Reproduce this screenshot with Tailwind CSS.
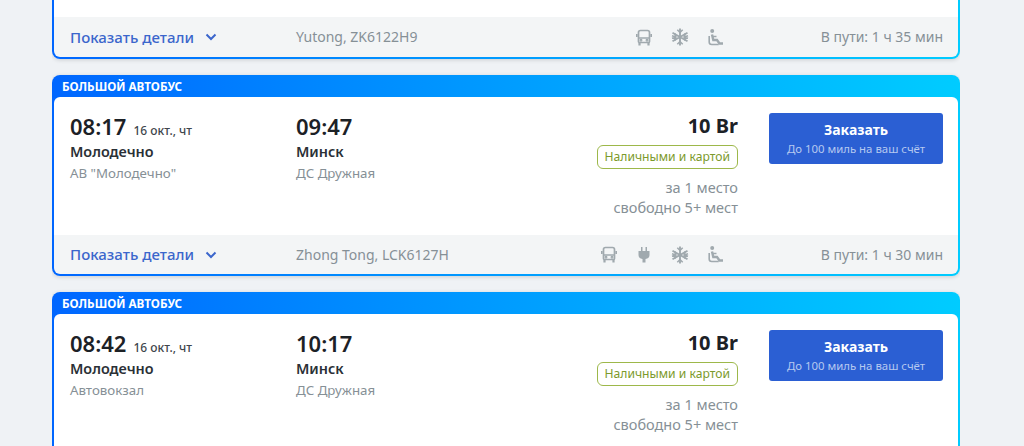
<!DOCTYPE html>
<html lang="ru">
<head>
  <meta charset="UTF-8">
  <meta name="viewport" content="width=device-width, initial-scale=1.0">
  <title>Расписание</title>
  <script src="https://cdn.jsdelivr.net/npm/@tailwindcss/browser@4"></script>
</head>
<body class="bg-[#eff2f5] font-['Noto_Sans',sans-serif] overflow-hidden">
  <div class="h-[446px] overflow-hidden w-[908px] ml-[52px] flex flex-col gap-4">

    <!-- previous card, cut by the top of the window -->
    <div class="shrink-0 rounded-b-lg bg-gradient-to-r from-[#0066ff] to-[#00ccff] px-[2px] pb-[2px] shadow-[0_1px_4px_rgba(0,0,0,0.15)]">
      <div class="h-[17px] bg-white"></div>
      <div class="h-10 bg-[#f3f5f6] rounded-b-md flex items-center pl-4 pr-[15px]">
        <button class="w-[226px] flex items-center text-left text-[15px] tracking-[0.03px] font-medium text-[#3b66cc]">
          Показать детали
          <svg class="ml-[11px] w-3 h-3" viewBox="0 0 12 12" fill="none" stroke="#3b66cc" stroke-width="2"><path d="M1.500 3.500l4.500 4.500 4.500-4.500"/></svg>
        </button>
        <span class="text-sm text-[#869096]">Yutong, ZK6122H9</span>
        <div class="ml-auto flex items-center gap-[19px] text-[#a0a9ae]">
          <svg class="w-4 h-[17px]" viewBox="0 0 16 17" fill="none" stroke="currentColor" stroke-width="1.7"><path d="M2.500 3.500q0-2 2-2h7q2 0 2 2v9q0 1-1 1h-9q-1 0-1-1z"/><path d="M2.500 9h11M.8 5v3M15.200 5v3"/><path d="M3.500 14v2.500M12.500 14v2.500" stroke-width="2.200"/><circle cx="5" cy="11.300" r=".6"/><circle cx="11" cy="11.300" r=".6"/></svg>
          <svg class="w-[18px] h-[18px]" viewBox="0 0 18 18" fill="none" stroke="currentColor" stroke-width="1.900"><path d="M9 .5v17M1.500 4.700l15 8.600M1.500 13.300l15-8.600"/><path d="M6.300 1.800L9 4.500l2.700-2.700M6.300 16.200L9 13.500l2.700 2.700M1 7.800l3.700 1.200-.9-3.800M17 10.200L13.300 9l.9 3.800M1 10.200L4.700 9l-.9 3.800M17 7.800L13.300 9l.9-3.800" stroke-width="1.500"/></svg>
          <svg class="w-4 h-[17px]" viewBox="0 0 16 17" fill="none" stroke="currentColor"><circle cx="4.200" cy="2" r="2" fill="currentColor" stroke="none"/><path d="M4 5.500l1.300 5.500h3.700l2.500 3.500h3.500" stroke-width="2.400"/><path d="M5 7.500h3.500" stroke-width="1.500"/><path d="M1.200 7v6q0 2.500 2.500 2.500h7" stroke-width="1.600"/></svg>
        </div>
        <span class="ml-[97px] text-sm text-[#869096]">В пути: 1 ч 35 мин</span>
      </div>
    </div>

    <!-- card -->
    <div class="shrink-0 rounded-lg bg-gradient-to-r from-[#0066ff] to-[#00ccff] px-[2px] pb-[2px] shadow-[0_1px_4px_rgba(0,0,0,0.15)]">
      <div class="h-[22px] pl-2 pt-[2px] flex items-center text-[11.7px] font-bold text-white">БОЛЬШОЙ АВТОБУС</div>
      <div class="h-[138px] bg-white rounded-t-md flex pl-4 pr-[15px] pt-[13px]">
        <div class="w-[226px]">
          <div class="flex items-baseline gap-[7px] h-[30px] text-[22px] font-semibold text-[#1c2126]">08:17 <span class="text-xs font-medium text-[#3f464c]">16 окт., чт</span></div>
          <div class="mt-[2px] text-[14.4px] leading-5 font-semibold text-[#2a3036]">Молодечно</div>
          <div class="mt-[1px] text-[13.3px] leading-5 text-[#869096]">АВ "Молодечно"</div>
        </div>
        <div>
          <div class="h-[30px] text-[22px] font-semibold text-[#1c2126]">09:47</div>
          <div class="mt-[2px] text-[14.4px] leading-5 font-semibold text-[#2a3036]">Минск</div>
          <div class="mt-[1px] text-[13.3px] leading-5 text-[#869096]">ДС Дружная</div>
        </div>
        <div class="ml-auto flex flex-col items-end pt-[2px]">
          <div class="h-[30px] text-xl leading-[28px] font-bold text-[#1c2126]">10 Br</div>
          <div class="mt-[3px] h-6 px-[7px] flex items-center rounded-md border border-[#9db84a] text-[12.15px] text-[#7c9a2b]">Наличными и картой</div>
          <div class="mt-[8px] text-[14.5px] leading-5 text-[#869096]">за 1 место</div>
          <div class="text-[14.5px] leading-5 text-[#869096]">свободно 5+ мест</div>
        </div>
        <button class="ml-[31px] mt-[3px] w-[174px] h-[51px] rounded-[3px] bg-[#2b5fd3] flex flex-col items-center justify-center">
          <span class="text-sm leading-5 font-bold text-white">Заказать</span>
          <span class="text-[11.4px] leading-4 mt-[1px] text-[#b6c9f0]">До 100 миль на ваш счёт</span>
        </button>
      </div>
      <div class="h-[39px] bg-[#f3f5f6] rounded-b-md flex items-center pl-4 pr-[15px]">
        <button class="w-[226px] flex items-center text-left text-[15px] tracking-[0.03px] font-medium text-[#3b66cc]">
          Показать детали
          <svg class="ml-[11px] w-3 h-3" viewBox="0 0 12 12" fill="none" stroke="#3b66cc" stroke-width="2"><path d="M1.500 3.500l4.500 4.500 4.500-4.500"/></svg>
        </button>
        <span class="text-sm text-[#869096]">Zhong Tong, LCK6127H</span>
        <div class="ml-auto flex items-center gap-[19px] text-[#a0a9ae]">
          <svg class="w-4 h-[17px]" viewBox="0 0 16 17" fill="none" stroke="currentColor" stroke-width="1.7"><path d="M2.500 3.500q0-2 2-2h7q2 0 2 2v9q0 1-1 1h-9q-1 0-1-1z"/><path d="M2.500 9h11M.8 5v3M15.200 5v3"/><path d="M3.500 14v2.500M12.500 14v2.500" stroke-width="2.200"/><circle cx="5" cy="11.300" r=".6"/><circle cx="11" cy="11.300" r=".6"/></svg>
          <svg class="w-4 h-[17px]" viewBox="0 0 16 17" fill="currentColor"><path d="M5 1h1.500v4H5zM9.500 1H11v4H9.500z"/><path d="M2.500 5h11v4q0 3.500-4 4V16.500h-3V13q-4-.5-4-4z"/></svg>
          <svg class="w-[18px] h-[18px]" viewBox="0 0 18 18" fill="none" stroke="currentColor" stroke-width="1.900"><path d="M9 .5v17M1.500 4.700l15 8.600M1.500 13.300l15-8.600"/><path d="M6.300 1.800L9 4.500l2.700-2.700M6.300 16.200L9 13.500l2.700 2.700M1 7.800l3.700 1.200-.9-3.800M17 10.200L13.300 9l.9 3.800M1 10.200L4.700 9l-.9 3.800M17 7.800L13.300 9l.9-3.800" stroke-width="1.500"/></svg>
          <svg class="w-4 h-[17px]" viewBox="0 0 16 17" fill="none" stroke="currentColor"><circle cx="4.200" cy="2" r="2" fill="currentColor" stroke="none"/><path d="M4 5.500l1.300 5.500h3.700l2.500 3.500h3.500" stroke-width="2.400"/><path d="M5 7.500h3.500" stroke-width="1.500"/><path d="M1.200 7v6q0 2.500 2.500 2.500h7" stroke-width="1.600"/></svg>
        </div>
        <span class="ml-[97px] text-sm text-[#869096]">В пути: 1 ч 30 мин</span>
      </div>
    </div>

    <!-- next card, cut by the bottom of the window -->
    <div class="shrink-0 rounded-lg bg-gradient-to-r from-[#0066ff] to-[#00ccff] px-[2px] pb-[2px] shadow-[0_1px_4px_rgba(0,0,0,0.15)]">
      <div class="h-[22px] pl-2 pt-[2px] flex items-center text-[11.7px] font-bold text-white">БОЛЬШОЙ АВТОБУС</div>
      <div class="h-[138px] bg-white rounded-t-md flex pl-4 pr-[15px] pt-[13px]">
        <div class="w-[226px]">
          <div class="flex items-baseline gap-[7px] h-[30px] text-[22px] font-semibold text-[#1c2126]">08:42 <span class="text-xs font-medium text-[#3f464c]">16 окт., чт</span></div>
          <div class="mt-[2px] text-[14.4px] leading-5 font-semibold text-[#2a3036]">Молодечно</div>
          <div class="mt-[1px] text-[13.3px] leading-5 text-[#869096]">Автовокзал</div>
        </div>
        <div>
          <div class="h-[30px] text-[22px] font-semibold text-[#1c2126]">10:17</div>
          <div class="mt-[2px] text-[14.4px] leading-5 font-semibold text-[#2a3036]">Минск</div>
          <div class="mt-[1px] text-[13.3px] leading-5 text-[#869096]">ДС Дружная</div>
        </div>
        <div class="ml-auto flex flex-col items-end pt-[2px]">
          <div class="h-[30px] text-xl leading-[28px] font-bold text-[#1c2126]">10 Br</div>
          <div class="mt-[3px] h-6 px-[7px] flex items-center rounded-md border border-[#9db84a] text-[12.15px] text-[#7c9a2b]">Наличными и картой</div>
          <div class="mt-[8px] text-[14.5px] leading-5 text-[#869096]">за 1 место</div>
          <div class="text-[14.5px] leading-5 text-[#869096]">свободно 5+ мест</div>
        </div>
        <button class="ml-[31px] mt-[3px] w-[174px] h-[51px] rounded-[3px] bg-[#2b5fd3] flex flex-col items-center justify-center">
          <span class="text-sm leading-5 font-bold text-white">Заказать</span>
          <span class="text-[11.4px] leading-4 mt-[1px] text-[#b6c9f0]">До 100 миль на ваш счёт</span>
        </button>
      </div>
    </div>

  </div>
</body>
</html>
